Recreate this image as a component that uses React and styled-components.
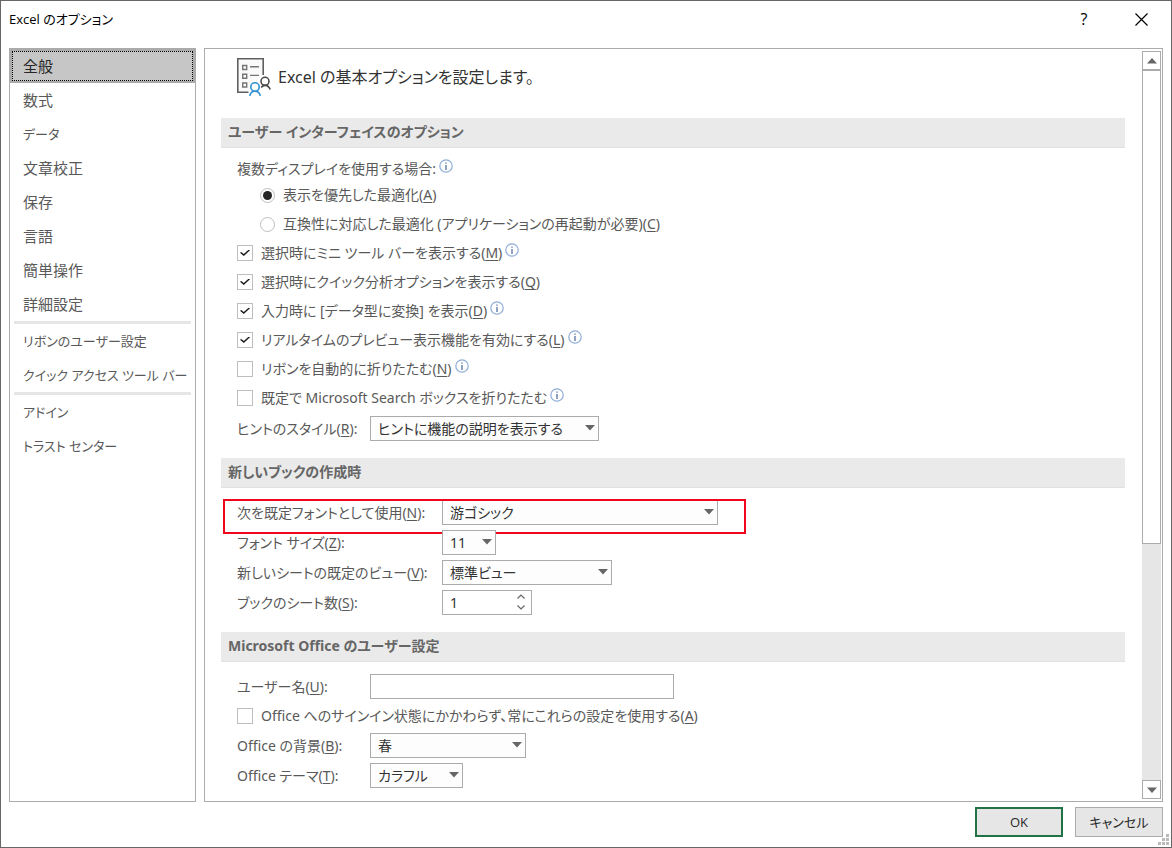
import React, { useState } from "react";
import styled, { createGlobalStyle, css } from "styled-components";

const GlobalStyle = createGlobalStyle`
  *, *::before, *::after { box-sizing: border-box; }
  body {
    margin: 0;
    background: #fff;
    color: #595959;
    font-family: "Noto Sans", "Noto Sans CJK JP", sans-serif;
    font-size: 14px;
    line-height: 20px;
    font-feature-settings: "palt";
  }
  button, input, select { font: inherit; font-feature-settings: inherit; color: inherit; margin: 0; }
  u { text-decoration: underline; text-underline-offset: 2px; }
`;

const Dialog = styled.div`
  position: relative;
  display: flex;
  flex-direction: column;
  min-height: 100vh;
  padding: 0 8px 10px;
  border: 1px solid #666;
  background: #fff;
`;

const TitleBar = styled.header`
  display: flex;
  align-items: center;
  height: 36px;
  margin-bottom: 11px;
`;

const Title = styled.h1`
  flex: 1;
  margin: 0;
  color: #000;
  font-family: "Open Sans", "Noto Sans CJK JP", sans-serif;
  font-size: 13px;
  font-weight: 400;
`;

const TitleButton = styled.button`
  display: flex;
  align-items: center;
  justify-content: center;
  width: 44px;
  height: 28px;
  margin-left: 13px;
  padding: 0;
  border: 0;
  background: none;
  color: #000;
  font-family: "Open Sans", sans-serif;
  font-size: 16px;
`;

const Main = styled.div`
  display: flex;
  flex: 1;
  gap: 8px;
`;

const Nav = styled.nav`
  flex: none;
  width: 187px;
  border: 1px solid #ababab;
`;

const NavItem = styled.button`
  display: block;
  width: 100%;
  height: 34px;
  padding: 0 11px;
  border: 2px solid transparent;
  background: none;
  font-size: ${(p) => (p.$compact ? "13px" : "15px")};
  text-align: left;
  white-space: nowrap;
  ${(p) =>
    p.$selected &&
    css`
      border-color: #ababab;
      background: #c6c6c6;
      color: #262626;
      outline: 1px dotted #000;
      outline-offset: -3px;
    `}
`;

const NavRule = styled.hr`
  height: 3px;
  margin: 0 4px;
  border: 0;
  background: #e6e6e6;
`;

const Panel = styled.main`
  display: flex;
  flex: 1;
  min-width: 0;
  border: 1px solid #ababab;
`;

const Content = styled.div`
  flex: 1;
  min-width: 0;
  padding: 0 16px 13px;
`;

const Intro = styled.div`
  display: flex;
  align-items: center;
  gap: 6px;
  height: 56px;
  margin-bottom: 13px;
  padding-left: 15px;
`;

const IntroText = styled.h2`
  margin: 0;
  color: #333;
  font-size: 16px;
  font-weight: 400;
`;

const Section = styled.section`
  & + & { margin-top: 17px; }
`;

const SectionTitle = styled.h3`
  height: 30px;
  margin: 0;
  padding: 0 7px;
  border-bottom: 1px solid #e1e1e1;
  background: #eaeaea;
  color: #666;
  font-size: 14px;
  font-weight: 700;
  line-height: 28px;
`;

const SectionBody = styled.div`
  display: flex;
  flex-direction: column;
  gap: 5px;
  padding: 12px 0 0 16px;
`;

const Caption = styled.div`
  display: flex;
  align-items: center;
  height: 18px;
`;

const Choice = styled.div`
  display: flex;
  align-items: center;
  height: 24px;
  padding-left: ${(p) => (p.$nested ? "23px" : "0")};
`;

const ChoiceText = styled.label`
  padding-left: 8px;
`;

const CheckBox = styled.input.attrs({ type: "checkbox" })`
  appearance: none;
  display: grid;
  place-items: center;
  width: 16px;
  height: 16px;
  border: 1px solid #bebebe;
  background: #fff;
  &:checked::before {
    content: "";
    width: 10px;
    height: 7px;
    background: #1a1a1a;
    clip-path: polygon(0 48%, 12% 36%, 38% 66%, 88% 0, 100% 12%, 38% 94%);
  }
`;

const Radio = styled.input.attrs({ type: "radio" })`
  appearance: none;
  display: grid;
  place-items: center;
  width: 15px;
  height: 15px;
  border: 1px solid #bebebe;
  border-radius: 50%;
  background: #fff;
  &:checked::before {
    content: "";
    width: 9px;
    height: 9px;
    border-radius: 50%;
    background: #262626;
  }
`;

const Field = styled.div`
  position: relative;
  display: flex;
  align-items: flex-end;
  min-height: ${(p) => (p.$tall ? "26px" : "25px")};
`;

const FieldLabel = styled.label`
  flex: none;
  width: ${(p) => (p.$wide ? "205px" : "133px")};
  line-height: 24px;
`;

const Control = styled.div`
  position: relative;
  width: ${(p) => p.$width}px;
  height: 25px;
`;

const SelectBox = styled.select`
  appearance: none;
  display: block;
  width: 100%;
  height: 25px;
  padding: 0 20px 0 7px;
  border: 1px solid #ababab;
  border-radius: 0;
  background: #fdfdfd;
  color: #333;
`;

const TextBox = styled.input`
  display: block;
  width: 100%;
  height: 25px;
  padding: 0 20px 0 7px;
  border: 1px solid #ababab;
  background: #fff;
  color: #333;
`;

const DropArrow = styled.svg`
  position: absolute;
  top: 9px;
  right: 4px;
  pointer-events: none;
`;

const Stepper = styled.div`
  position: absolute;
  top: 1px;
  right: 1px;
  display: flex;
  flex-direction: column;
`;

const StepButton = styled.button`
  display: flex;
  align-items: center;
  justify-content: center;
  width: 20px;
  height: 11px;
  padding: 0;
  border: 0;
  background: none;
`;

const Highlight = styled.div`
  position: absolute;
  inset: -1px auto auto -14px;
  width: 523px;
  height: 35px;
  border: 2px solid #f0071c;
  pointer-events: none;
`;

const InfoMark = styled.svg`
  flex: none;
  margin: 0 0 6px 3px;
`;

const ScrollBar = styled.div`
  display: flex;
  flex: none;
  flex-direction: column;
  width: 19px;
  margin: 2px 1px;
  background: #e6e6e6;
`;

const ScrollButton = styled.button`
  display: flex;
  flex: none;
  align-items: center;
  justify-content: center;
  height: 19px;
  padding: 0;
  border: 1px solid #ababab;
  background: #fff;
`;

const ScrollThumb = styled.div`
  flex: 2;
  border: 1px solid #ababab;
  background: #fff;
`;

const ScrollRest = styled.div`
  flex: 1;
`;

const Footer = styled.footer`
  display: flex;
  justify-content: flex-end;
  gap: 12px;
  padding-top: 5px;
`;

const ActionButton = styled.button`
  width: 88px;
  height: 30px;
  padding: 0;
  border: ${(p) => (p.$primary ? "2px solid #217346" : "1px solid #ababab")};
  background: #e6e6e6;
  color: #262626;
  font-family: "Open Sans", "Noto Sans CJK JP", sans-serif;
  font-size: 13px;
`;

const Grip = styled.svg`
  position: absolute;
  right: 2px;
  bottom: 2px;
`;

function Info() {
  return (
    <InfoMark width="14" height="14" viewBox="0 0 14 14" role="img" aria-label="情報">
      <circle cx="7" cy="7" r="6.2" fill="#fff" stroke="#8fadd8" strokeWidth="1.2" />
      <path d="M7 6v5" stroke="#44649c" strokeWidth="1.2" />
      <path d="M7 3.4v1.4" stroke="#44649c" strokeWidth="1.2" />
    </InfoMark>
  );
}

function Key({ children }) {
  return (
    <>
      (<u>{children}</u>)
    </>
  );
}

function Check({ id, text, hotkey, checked, info }) {
  return (
    <Choice>
      <CheckBox id={id} defaultChecked={checked} />
      <ChoiceText htmlFor={id}>
        {text}
        {hotkey && <Key>{hotkey}</Key>}
      </ChoiceText>
      {info && <Info />}
    </Choice>
  );
}

function Label({ id, text, hotkey, wide }) {
  return (
    <FieldLabel htmlFor={id} $wide={wide}>
      {text}
      <Key>{hotkey}</Key>:
    </FieldLabel>
  );
}

function SelectField({ id, text, hotkey, wide, tall, width, value, children }) {
  return (
    <Field $tall={tall}>
      <Label id={id} text={text} hotkey={hotkey} wide={wide} />
      <Control $width={width}>
        <SelectBox id={id} defaultValue={value}>
          <option>{value}</option>
        </SelectBox>
        <DropArrow width="10" height="6" viewBox="0 0 10 6" aria-hidden="true">
          <path d="M0 0h10L5 5.5z" fill="#666" />
        </DropArrow>
      </Control>
      {children}
    </Field>
  );
}

function OptionsIcon() {
  return (
    <svg width="36" height="40" viewBox="0 0 36 40" fill="none" strokeWidth="1.6" aria-hidden="true">
      <path d="M2.8 2.6h23.6V17l-5 6-8 11.4H2.8z" fill="#fafafa" />
      <path d="M12.5 35.200H1.800V1.800h25.400V18" stroke="#5f5f5f" />
      <g stroke="#757575" strokeWidth="1.400">
        <path d="M6.700 8.500h4v4h-4zM6.700 17.200h4v4h-4zM6.700 26h4v4h-4z" />
        <path d="M14 9.700h9M14 18.400h9" />
      </g>
      <circle cx="29" cy="24.300" r="4" fill="#fff" stroke="#4a4a4a" />
      <path d="M25.200 30.500c1-1.400 2.200-2.100 3.800-2.100 2.600 0 4.200 1.400 5.200 4.200" stroke="#4a4a4a" />
      <circle cx="19" cy="30" r="4.200" fill="#fff" stroke="#2f8fd0" />
      <path d="M13.700 38.800c.6-3 2.600-4.600 5.300-4.600s4.700 1.600 5.300 4.600" stroke="#2f8fd0" />
    </svg>
  );
}

const NAV_GROUPS = [
  ["全般", "数式", "データ", "文章校正", "保存", "言語", "簡単操作", "詳細設定"],
  ["リボンのユーザー設定", "クイック アクセス ツール バー"],
  ["アドイン", "トラスト センター"],
];

const hasKatakana = (text) => /[ァ-ヶ]/.test(text);

export default function App() {
  const [page, setPage] = useState("全般");
  const [sheets, setSheets] = useState(1);

  return (
    <>
      <GlobalStyle />
      <Dialog role="dialog" aria-labelledby="dialog-title" lang="ja">
        <TitleBar>
          <Title id="dialog-title">Excel のオプション</Title>
          <TitleButton aria-label="ヘルプ">?</TitleButton>
          <TitleButton aria-label="閉じる">
            <svg width="13" height="13" viewBox="0 0 13 13" aria-hidden="true">
              <path d="M.5.5l12 12M12.500.5l-12 12" stroke="#000" strokeWidth="1.200" />
            </svg>
          </TitleButton>
        </TitleBar>

        <Main>
          <Nav>
            {NAV_GROUPS.map((group, index) => (
              <React.Fragment key={group[0]}>
                {index > 0 && <NavRule />}
                {group.map((name) => (
                  <NavItem
                    key={name}
                    $compact={hasKatakana(name)}
                    $selected={name === page}
                    onClick={() => setPage(name)}
                  >
                    {name}
                  </NavItem>
                ))}
              </React.Fragment>
            ))}
          </Nav>

          <Panel>
            <Content>
              <Intro>
                <OptionsIcon />
                <IntroText>Excel の基本オプションを設定します。</IntroText>
              </Intro>

              <Section>
                <SectionTitle>ユーザー インターフェイスのオプション</SectionTitle>
                <SectionBody>
                  <Caption>
                    複数ディスプレイを使用する場合:
                    <Info />
                  </Caption>
                  <Choice $nested>
                    <Radio id="display-best" name="display" defaultChecked />
                    <ChoiceText htmlFor="display-best">
                      表示を優先した最適化<Key>A</Key>
                    </ChoiceText>
                  </Choice>
                  <Choice $nested>
                    <Radio id="display-compat" name="display" />
                    <ChoiceText htmlFor="display-compat">
                      互換性に対応した最適化 (アプリケーションの再起動が必要)<Key>C</Key>
                    </ChoiceText>
                  </Choice>
                  <Check id="mini" text="選択時にミニ ツール バーを表示する" hotkey="M" checked info />
                  <Check id="quick" text="選択時にクイック分析オプションを表示する" hotkey="Q" checked />
                  <Check id="convert" text="入力時に [データ型に変換] を表示" hotkey="D" checked info />
                  <Check id="preview" text="リアルタイムのプレビュー表示機能を有効にする" hotkey="L" checked info />
                  <Check id="ribbon" text="リボンを自動的に折りたたむ" hotkey="N" info />
                  <Check id="search" text="既定で Microsoft Search ボックスを折りたたむ" info />
                  <SelectField id="tips" text="ヒントのスタイル" hotkey="R" tall width={229} value="ヒントに機能の説明を表示する" />
                </SectionBody>
              </Section>

              <Section>
                <SectionTitle>新しいブックの作成時</SectionTitle>
                <SectionBody>
                  <SelectField id="font" text="次を既定フォントとして使用" hotkey="N" wide width={276} value="游ゴシック">
                    <Highlight />
                  </SelectField>
                  <SelectField id="size" text="フォント サイズ" hotkey="Z" wide width={54} value="11" />
                  <SelectField id="view" text="新しいシートの既定のビュー" hotkey="V" wide width={170} value="標準ビュー" />
                  <Field>
                    <Label id="sheets" text="ブックのシート数" hotkey="S" wide />
                    <Control $width={90}>
                      <TextBox
                        id="sheets"
                        inputMode="numeric"
                        value={sheets}
                        onChange={(e) => setSheets(Number(e.target.value) || 1)}
                      />
                      <Stepper>
                        <StepButton aria-label="増やす" onClick={() => setSheets(sheets + 1)}>
                          <svg width="8" height="5" viewBox="0 0 8 5" fill="none" aria-hidden="true">
                            <path d="M.5 4.500L4 1l3.500 3.500" stroke="#666" strokeWidth="1.200" />
                          </svg>
                        </StepButton>
                        <StepButton aria-label="減らす" onClick={() => setSheets(Math.max(1, sheets - 1))}>
                          <svg width="8" height="5" viewBox="0 0 8 5" fill="none" aria-hidden="true">
                            <path d="M.5.5L4 4 7.500.5" stroke="#666" strokeWidth="1.200" />
                          </svg>
                        </StepButton>
                      </Stepper>
                    </Control>
                  </Field>
                </SectionBody>
              </Section>

              <Section>
                <SectionTitle>Microsoft Office のユーザー設定</SectionTitle>
                <SectionBody>
                  <Field>
                    <Label id="user" text="ユーザー名" hotkey="U" />
                    <Control $width={304}>
                      <TextBox id="user" type="text" />
                    </Control>
                  </Field>
                  <Check
                    id="always"
                    text="Office へのサインイン状態にかかわらず、常にこれらの設定を使用する"
                    hotkey="A"
                  />
                  <SelectField id="background" text="Office の背景" hotkey="B" width={156} value="春" />
                  <SelectField id="theme" text="Office テーマ" hotkey="T" width={93} value="カラフル" />
                </SectionBody>
              </Section>
            </Content>

            <ScrollBar>
              <ScrollButton aria-label="上へスクロール">
                <svg width="10" height="6" viewBox="0 0 10 6" aria-hidden="true">
                  <path d="M0 5.500h10L5 0z" fill="#666" />
                </svg>
              </ScrollButton>
              <ScrollThumb />
              <ScrollRest />
              <ScrollButton aria-label="下へスクロール">
                <svg width="10" height="6" viewBox="0 0 10 6" aria-hidden="true">
                  <path d="M0 .5h10L5 6z" fill="#666" />
                </svg>
              </ScrollButton>
            </ScrollBar>
          </Panel>
        </Main>

        <Footer>
          <ActionButton $primary>OK</ActionButton>
          <ActionButton>キャンセル</ActionButton>
        </Footer>

        <Grip width="11" height="11" viewBox="0 0 11 11" aria-hidden="true">
          <path d="M8 0h3v3H8zM4 4h3v3H4zM8 4h3v3H8zM0 8h3v3H0zM4 8h3v3H4zM8 8h3v3H8z" fill="#b9b9b9" />
        </Grip>
      </Dialog>
    </>
  );
}
